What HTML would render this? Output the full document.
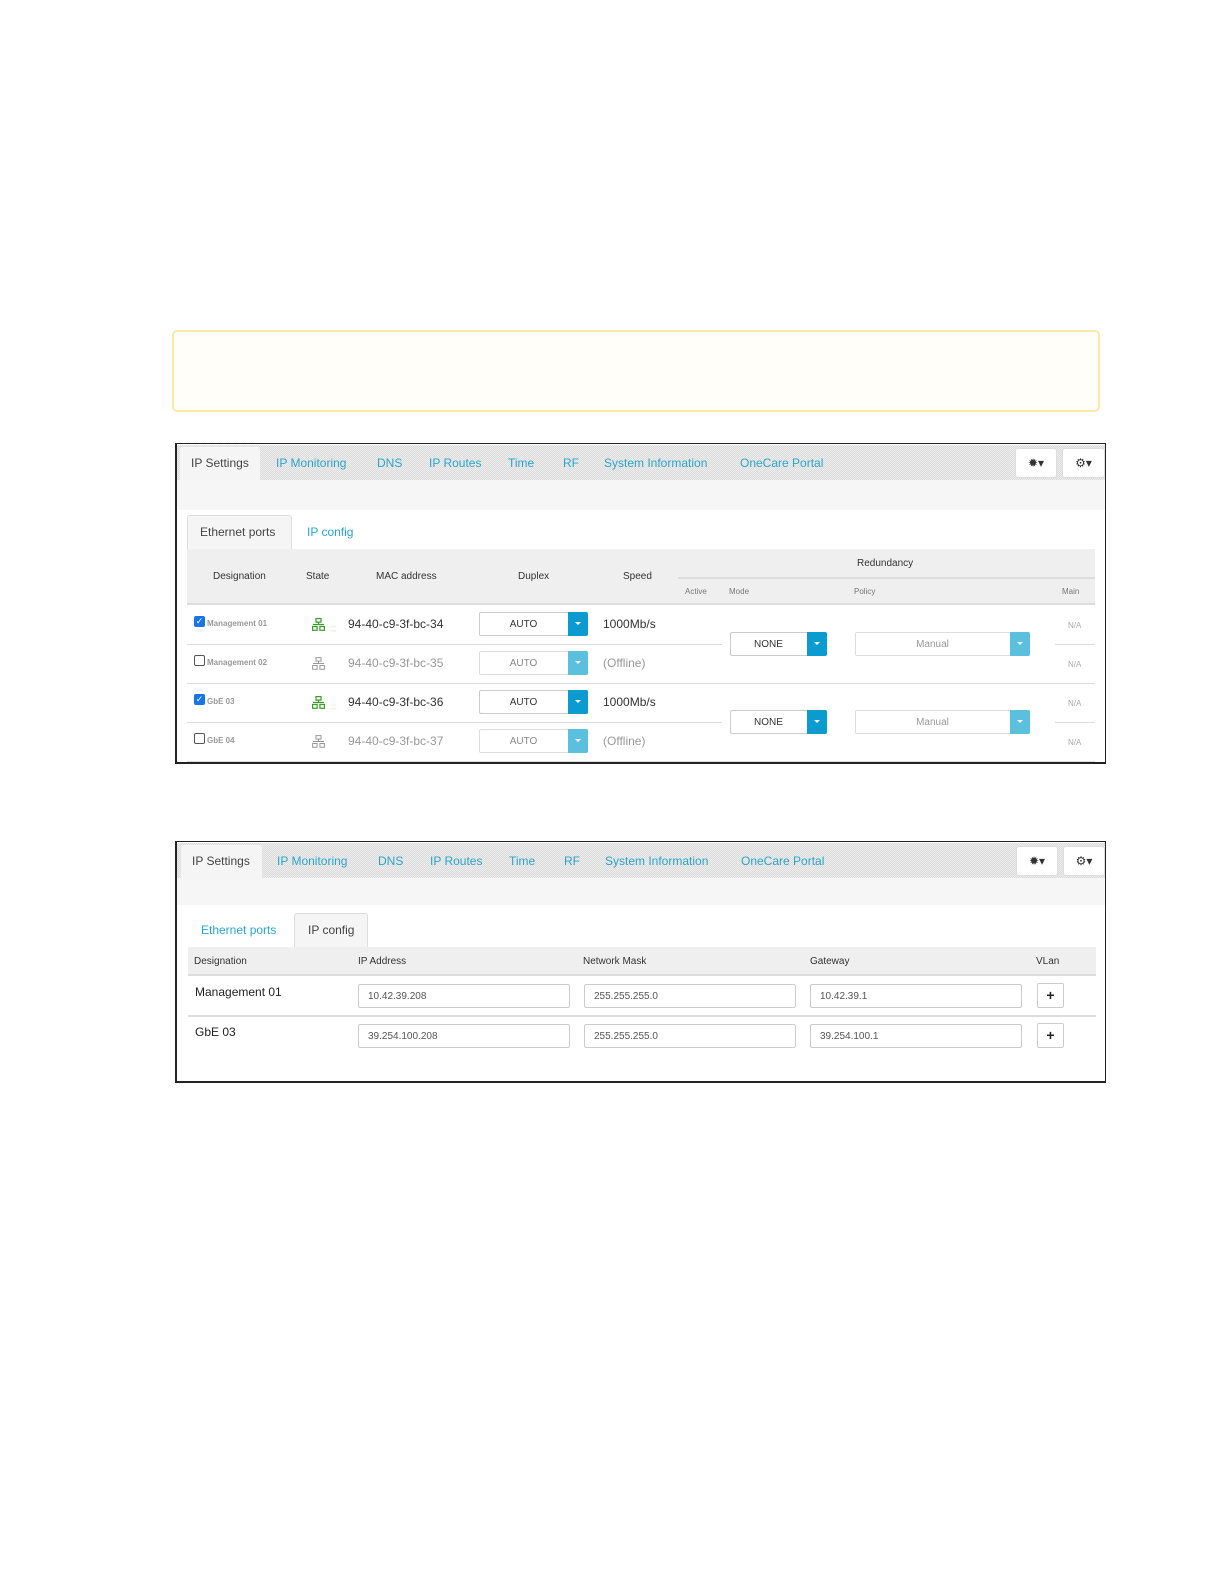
<!DOCTYPE html>
<html><head><meta charset="utf-8"><style>
*{margin:0;padding:0;box-sizing:border-box}
body{width:1224px;height:1584px;background:#fff;position:relative;font-family:"Liberation Sans",sans-serif;overflow:hidden}
.a{position:absolute}
.t{position:absolute;white-space:nowrap;line-height:14px}
.nav{background-color:#e6e6e6;background-image:repeating-conic-gradient(#dcdcdc 0 25%,#ececec 0 50%);background-size:2px 2px}
.lk{color:#2aa5d0;font-size:12px}
.hd{font-size:10px;color:#333}
.sm{font-size:8px;color:#777}
.sel{position:absolute;height:24px;border:1px solid #ccc;border-radius:2px;background:#fff;font-size:10px;display:flex;align-items:center;justify-content:center;color:#333}
.sel b{position:absolute;right:-1px;top:-1px;width:20px;height:24px;border-radius:0 2px 2px 0}
.sel b:after{content:"";position:absolute;left:7px;top:10px;border-left:3px solid transparent;border-right:3px solid transparent;border-top:3px solid #fff}
.dk{background:#0b9bd0}.lt{background:#5bc0de}
.inp{position:absolute;height:24px;border:1px solid #ccc;border-radius:2px;background:#fff;font-size:10px;color:#555;display:flex;align-items:center;padding-left:9px}
.ln{position:absolute;height:1px;background:#ddd}
.btn{position:absolute;background:#fff;border:1px solid #ddd;border-radius:3px;font-size:12px;text-align:center;line-height:28px;color:#333}
.pl{position:absolute;width:27px;height:25px;border:1px solid #ccc;border-radius:2px;background:#fff;text-align:center;font:bold 14px/23px "Liberation Sans",sans-serif;color:#222}
</style></head><body>

<div class="a" style="left:172px;top:330px;width:928px;height:82px;border:2px solid #fbe9a8;border-radius:5px;background:#fffef8"></div>

<!-- Panel 1 -->
<div class="a" style="left:175px;top:443px;width:931px;height:321px;border:1px solid #222;border-width:1px 1px 2px 2px"></div>
<div class="a nav" style="left:177px;top:445px;width:928px;height:35px"></div>
<div class="a" style="left:177px;top:480px;width:928px;height:30px;background:#f6f6f6"></div>
<div class="a" style="left:180px;top:447px;width:80px;height:34px;background:#f5f5f5;border-radius:3px 3px 0 0"></div>
<div class="t" style="left:191px;top:456px;font-size:12px;color:#444">IP Settings</div>
<div class="t lk" style="left:276px;top:456px">IP Monitoring</div>
<div class="t lk" style="left:377px;top:456px">DNS</div>
<div class="t lk" style="left:429px;top:456px">IP Routes</div>
<div class="t lk" style="left:508px;top:456px">Time</div>
<div class="t lk" style="left:563px;top:456px">RF</div>
<div class="t lk" style="left:604px;top:456px">System Information</div>
<div class="t lk" style="left:740px;top:456px">OneCare Portal</div>
<div class="btn" style="left:1015px;top:448px;width:42px;height:30px">&#x2739;&#9662;</div>
<div class="btn" style="left:1062px;top:448px;width:43px;height:30px">&#9881;&#9662;</div>

<div class="a" style="left:187px;top:515px;width:105px;height:35px;background:#f5f5f5;border:1px solid #ddd;border-bottom:none;border-radius:3px 3px 0 0"></div>
<div class="t" style="left:200px;top:525px;font-size:12px;color:#444">Ethernet ports</div>
<div class="t lk" style="left:307px;top:525px">IP config</div>

<div class="a" style="left:187px;top:549px;width:908px;height:56px;background:#efefef;border-bottom:2px solid #ddd"></div>
<div class="a" style="left:678px;top:577px;width:417px;height:2px;background:#ddd"></div>
<div class="t hd" style="left:213px;top:570px">Designation</div>
<div class="t hd" style="left:306px;top:570px">State</div>
<div class="t hd" style="left:376px;top:570px">MAC address</div>
<div class="t hd" style="left:518px;top:570px">Duplex</div>
<div class="t hd" style="left:623px;top:570px">Speed</div>
<div class="t hd" style="left:857px;top:557px">Redundancy</div>
<div class="t sm" style="left:685px;top:585px">Active</div>
<div class="t sm" style="left:729px;top:585px">Mode</div>
<div class="t sm" style="left:854px;top:585px">Policy</div>
<div class="t sm" style="left:1062px;top:585px">Main</div>

<div class="ln" style="left:187px;top:644px;width:535px"></div>
<div class="ln" style="left:187px;top:683px;width:908px"></div>
<div class="ln" style="left:187px;top:722px;width:535px"></div>
<div class="ln" style="left:1055px;top:644px;width:40px"></div>
<div class="ln" style="left:1055px;top:722px;width:40px"></div>
<div class="ln" style="left:187px;top:761px;width:908px"></div>

<div class="a" style="left:194px;top:616px;width:11px;height:11px;background:#1a73e8;border-radius:2px;color:#fff;font-size:9px;line-height:11px;text-align:center">&#10003;</div>
<div class="a" style="left:194px;top:655px;width:11px;height:11px;border:1px solid #555;border-radius:2px"></div>
<div class="a" style="left:194px;top:694px;width:11px;height:11px;background:#1a73e8;border-radius:2px;color:#fff;font-size:9px;line-height:11px;text-align:center">&#10003;</div>
<div class="a" style="left:194px;top:733px;width:11px;height:11px;border:1px solid #555;border-radius:2px"></div>
<div class="t" style="left:207px;top:617px;font-size:8px;color:#999;font-weight:bold">Management 01</div>
<div class="t" style="left:207px;top:656px;font-size:8px;color:#999;font-weight:bold">Management 02</div>
<div class="t" style="left:207px;top:695px;font-size:8px;color:#999;font-weight:bold">GbE 03</div>
<div class="t" style="left:207px;top:734px;font-size:8px;color:#999;font-weight:bold">GbE 04</div>

<svg class="a" style="left:312px;top:618px" width="13" height="13" viewBox="0 0 13 13" fill="none" stroke="#3a9a2a" stroke-width="1.2"><rect x="4" y="0.6" width="5" height="3.5"/><path d="M6.5 4v2.5M1 6.5h11"/><rect x="0.6" y="8.5" width="4.5" height="3.8"/><rect x="7.9" y="8.5" width="4.5" height="3.8"/></svg>
<svg class="a" style="left:312px;top:657px" width="13" height="13" viewBox="0 0 13 13" fill="none" stroke="#999" stroke-width="1"><rect x="4" y="0.6" width="5" height="3.5"/><path d="M6.5 4v2.5M1 6.5h11"/><rect x="0.6" y="8.5" width="4.5" height="3.8"/><rect x="7.9" y="8.5" width="4.5" height="3.8"/></svg>
<svg class="a" style="left:312px;top:696px" width="13" height="13" viewBox="0 0 13 13" fill="none" stroke="#3a9a2a" stroke-width="1.2"><rect x="4" y="0.6" width="5" height="3.5"/><path d="M6.5 4v2.5M1 6.5h11"/><rect x="0.6" y="8.5" width="4.5" height="3.8"/><rect x="7.9" y="8.5" width="4.5" height="3.8"/></svg>
<svg class="a" style="left:312px;top:735px" width="13" height="13" viewBox="0 0 13 13" fill="none" stroke="#999" stroke-width="1"><rect x="4" y="0.6" width="5" height="3.5"/><path d="M6.5 4v2.5M1 6.5h11"/><rect x="0.6" y="8.5" width="4.5" height="3.8"/><rect x="7.9" y="8.5" width="4.5" height="3.8"/></svg>

<div class="t" style="left:348px;top:617px;font-size:12px;color:#333">94-40-c9-3f-bc-34</div>
<div class="t" style="left:348px;top:656px;font-size:12px;color:#999">94-40-c9-3f-bc-35</div>
<div class="t" style="left:348px;top:695px;font-size:12px;color:#333">94-40-c9-3f-bc-36</div>
<div class="t" style="left:348px;top:734px;font-size:12px;color:#999">94-40-c9-3f-bc-37</div>

<div class="sel" style="left:479px;top:612px;width:109px"><span style="margin-right:20px">AUTO</span><b class="dk"></b></div>
<div class="sel" style="left:479px;top:651px;width:109px;color:#888;border-color:#ddd"><span style="margin-right:20px">AUTO</span><b class="lt"></b></div>
<div class="sel" style="left:479px;top:690px;width:109px"><span style="margin-right:20px">AUTO</span><b class="dk"></b></div>
<div class="sel" style="left:479px;top:729px;width:109px;color:#888;border-color:#ddd"><span style="margin-right:20px">AUTO</span><b class="lt"></b></div>

<div class="t" style="left:603px;top:617px;font-size:12px;color:#333">1000Mb/s</div>
<div class="t" style="left:603px;top:656px;font-size:12px;color:#999">(Offline)</div>
<div class="t" style="left:603px;top:695px;font-size:12px;color:#333">1000Mb/s</div>
<div class="t" style="left:603px;top:734px;font-size:12px;color:#999">(Offline)</div>

<div class="sel" style="left:730px;top:632px;width:97px"><span style="margin-right:20px">NONE</span><b class="dk"></b></div>
<div class="sel" style="left:730px;top:710px;width:97px"><span style="margin-right:20px">NONE</span><b class="dk"></b></div>
<div class="sel" style="left:855px;top:632px;width:175px;color:#999;border-color:#ddd"><span style="margin-right:20px">Manual</span><b class="lt"></b></div>
<div class="sel" style="left:855px;top:710px;width:175px;color:#999;border-color:#ddd"><span style="margin-right:20px">Manual</span><b class="lt"></b></div>

<div class="t" style="left:1068px;top:619px;font-size:8px;color:#aaa">N/A</div>
<div class="t" style="left:1068px;top:658px;font-size:8px;color:#aaa">N/A</div>
<div class="t" style="left:1068px;top:697px;font-size:8px;color:#aaa">N/A</div>
<div class="t" style="left:1068px;top:736px;font-size:8px;color:#aaa">N/A</div>

<!-- Panel 2 -->
<div class="a" style="left:175px;top:841px;width:931px;height:242px;border:1px solid #222;border-width:1px 1px 2px 2px"></div>
<div class="a nav" style="left:177px;top:843px;width:928px;height:35px"></div>
<div class="a" style="left:177px;top:878px;width:928px;height:27px;background:#f6f6f6"></div>
<div class="a" style="left:181px;top:845px;width:81px;height:34px;background:#f5f5f5;border-radius:3px 3px 0 0"></div>
<div class="t" style="left:192px;top:854px;font-size:12px;color:#444">IP Settings</div>
<div class="t lk" style="left:277px;top:854px">IP Monitoring</div>
<div class="t lk" style="left:378px;top:854px">DNS</div>
<div class="t lk" style="left:430px;top:854px">IP Routes</div>
<div class="t lk" style="left:509px;top:854px">Time</div>
<div class="t lk" style="left:564px;top:854px">RF</div>
<div class="t lk" style="left:605px;top:854px">System Information</div>
<div class="t lk" style="left:741px;top:854px">OneCare Portal</div>
<div class="btn" style="left:1016px;top:846px;width:42px;height:30px">&#x2739;&#9662;</div>
<div class="btn" style="left:1063px;top:846px;width:42px;height:30px">&#9881;&#9662;</div>

<div class="t lk" style="left:201px;top:923px">Ethernet ports</div>
<div class="a" style="left:294px;top:913px;width:74px;height:35px;background:#f5f5f5;border:1px solid #ddd;border-bottom:none;border-radius:3px 3px 0 0"></div>
<div class="t" style="left:308px;top:923px;font-size:12px;color:#444">IP config</div>

<div class="a" style="left:188px;top:947px;width:908px;height:29px;background:#efefef;border-bottom:2px solid #ddd"></div>
<div class="t hd" style="left:194px;top:955px">Designation</div>
<div class="t hd" style="left:358px;top:955px">IP Address</div>
<div class="t hd" style="left:583px;top:955px">Network Mask</div>
<div class="t hd" style="left:810px;top:955px">Gateway</div>
<div class="t hd" style="left:1036px;top:955px">VLan</div>

<div class="t" style="left:195px;top:985px;font-size:12px;color:#222">Management 01</div>
<div class="t" style="left:195px;top:1025px;font-size:12px;color:#222">GbE 03</div>
<div class="inp" style="left:358px;top:984px;width:212px">10.42.39.208</div>
<div class="inp" style="left:584px;top:984px;width:212px">255.255.255.0</div>
<div class="inp" style="left:810px;top:984px;width:212px">10.42.39.1</div>
<div class="pl" style="left:1037px;top:983px">+</div>
<div class="a" style="left:188px;top:1015px;width:908px;height:2px;background:#ddd"></div>
<div class="inp" style="left:358px;top:1024px;width:212px">39.254.100.208</div>
<div class="inp" style="left:584px;top:1024px;width:212px">255.255.255.0</div>
<div class="inp" style="left:810px;top:1024px;width:212px">39.254.100.1</div>
<div class="pl" style="left:1037px;top:1023px">+</div>

</body></html>
